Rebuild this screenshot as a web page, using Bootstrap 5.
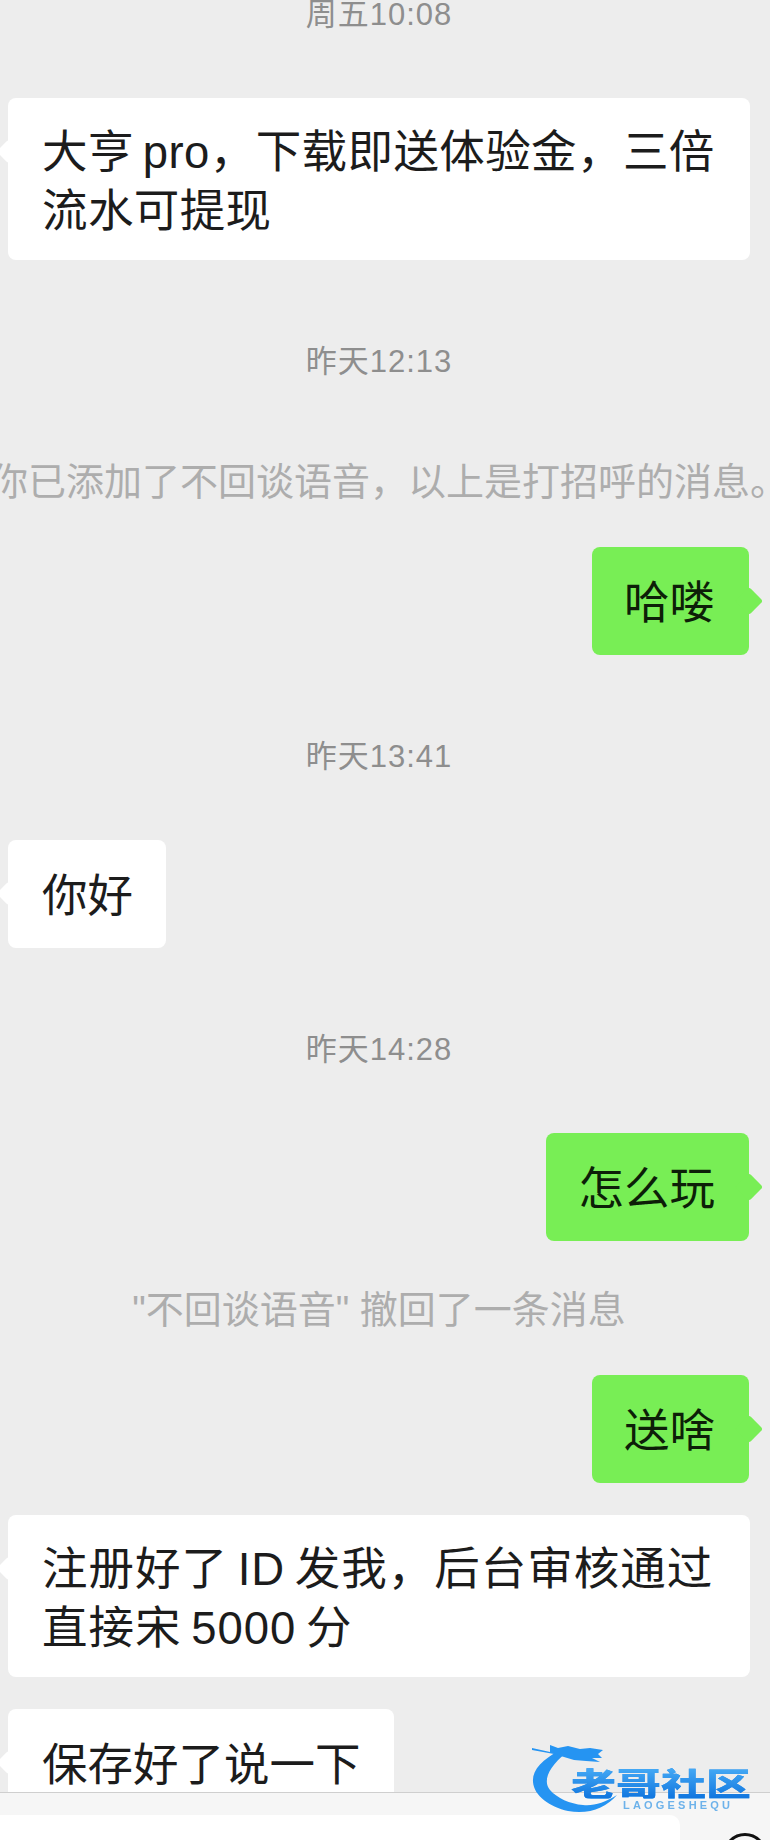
<!DOCTYPE html>
<html lang="zh-CN">
<head>
  <meta charset="UTF-8">
  <title>聊天记录</title>
  <meta name="viewport" content="width=device-width, initial-scale=1">
  <link href="https://cdn.jsdelivr.net/npm/bootstrap@5.3.3/dist/css/bootstrap.min.css" rel="stylesheet">
  <style>
    body {
      background: #ededed;
      font-family: "Liberation Sans", "Noto Sans CJK SC", sans-serif;
      width: 770px;
      height: 1840px;
      overflow: hidden;
    }
    .chat-scroll {
      height: 1792px;
      overflow: hidden;
      padding: 0 20px 0 8px;
    }
    .stamp {
      height: 40px;
      line-height: 42px;
      font-size: 31px;
      letter-spacing: 1px;
      color: #8e8e8e;
      text-align: center;
      margin: 81px 0 64px;
    }
    .stamp-first {
      margin-top: -6px;
    }
    .sys-line {
      height: 44px;
      line-height: 44px;
      font-size: 38px;
      color: #adadad;
      white-space: nowrap;
      margin: 47px 0 43px;
    }
    .sys-wide {
      margin: 79px 0 43px 20px;
    }
    .bubble-row {
      margin-bottom: 32px;
    }
    .bubble-msg {
      position: relative;
      padding: 28px 33px 22px 34px;
      font-size: 45.5px;
      line-height: 58px;
      color: #1c1c1c;
      background: #fff;
      border-radius: 8px;
      white-space: nowrap;
    }
    .bubble-two {
      width: 742px;
      padding-top: 25px;
      padding-bottom: 19px;
      line-height: 59px;
      letter-spacing: .4px;
      word-spacing: -4px;
    }
    .bubble-spread {
      letter-spacing: 1px;
    }
    .bubble-msg::before {
      content: "";
      position: absolute;
      top: 45px;
      left: -8px;
      width: 17px;
      height: 17px;
      background: inherit;
      border-radius: 3px;
      transform: rotate(45deg);
    }
    .bubble-mine {
      background: #78ee55;
      color: #0d1f08;
      margin-right: 1px;
      padding-left: 32px;
      padding-right: 34px;
    }
    .bubble-mine::before {
      top: 44px;
      left: auto;
      right: -10px;
      width: 20px;
      height: 20px;
    }
    .input-bar {
      height: 48px;
      background: #f6f6f6;
      border-top: 1px solid #cfcfcf;
      overflow: hidden;
    }
    .input-box {
      width: 680px;
      height: 40px;
      margin-top: 22px;
      background: #fff;
      border-top-right-radius: 10px;
    }
    .round-btn {
      width: 44px;
      height: 44px;
      margin: 40px 0 0 43px;
      border: 3px solid #111;
      border-radius: 50%;
      flex-shrink: 0;
    }
    .site-mark {
      position: absolute;
      left: 528px;
      top: 1740px;
      width: 232px;
      height: 80px;
      filter: blur(.7px);
    }
    .site-mark svg {
      position: absolute;
      left: 0;
      top: 0;
    }
    .mark-name {
      position: absolute;
      left: 43px;
      top: 19px;
      font-family: "Noto Sans CJK SC", sans-serif;
      font-size: 45px;
      font-weight: 900;
      line-height: 46px;
      white-space: nowrap;
      background: linear-gradient(#4aaef7, #1075de);
      -webkit-background-clip: text;
      background-clip: text;
      color: transparent;
      transform: scaleY(.72);
      filter: drop-shadow(0 0 .7px #1c88ea);
    }
    .mark-sub {
      position: absolute;
      left: 95px;
      top: 59px;
      font-size: 11px;
      line-height: 12px;
      font-weight: 700;
      letter-spacing: 3.2px;
      color: #6db2ea;
      white-space: nowrap;
    }
  </style>
</head>
<body>

<div class="chat-scroll">
  <div class="stamp stamp-first">周五10:08</div>

  <div class="bubble-row d-flex">
    <div class="bubble-msg bubble-two">大亨 pro，下载即送体验金，三倍<br>流水可提现</div>
  </div>

  <div class="stamp">昨天12:13</div>

  <div class="sys-line sys-wide d-flex justify-content-center">你已添加了不回谈语音，以上是打招呼的消息。</div>

  <div class="bubble-row d-flex justify-content-end">
    <div class="bubble-msg bubble-mine">哈喽</div>
  </div>

  <div class="stamp">昨天13:41</div>

  <div class="bubble-row d-flex">
    <div class="bubble-msg">你好</div>
  </div>

  <div class="stamp">昨天14:28</div>

  <div class="bubble-row d-flex justify-content-end">
    <div class="bubble-msg bubble-mine">怎么玩</div>
  </div>

  <div class="sys-line d-flex justify-content-center">"不回谈语音" 撤回了一条消息</div>

  <div class="bubble-row d-flex justify-content-end">
    <div class="bubble-msg bubble-mine">送啥</div>
  </div>

  <div class="bubble-row d-flex">
    <div class="bubble-msg bubble-two bubble-spread">注册好了 ID 发我，后台审核通过<br>直接宋 5000 分</div>
  </div>

  <div class="bubble-row d-flex">
    <div class="bubble-msg">保存好了说一下</div>
  </div>
</div>

<div class="input-bar d-flex">
  <div class="input-box"></div>
  <div class="round-btn"></div>
</div>

<div class="site-mark">
  <svg width="110" height="80" viewBox="0 0 110 80">
    <path fill="#2594f2" d="M32 10C14 20 4 30 5 42C6 56 22 67 40 71C60 75 78 68 89 55C76 63 66 66 55 65C42 64 29 58 22 50C15 42 19 28 39 12Z"/>
    <path fill="#2594f2" d="M22 5L30 8L40 6L52 9L62 8L75 10L70 14L74 18L64 18L72 22L58 21L46 20L36 17L26 14L4 10L4 8L22 12Z"/>
  </svg>
  <div class="mark-name">老哥社区</div>
  <div class="mark-sub">LAOGESHEQU</div>
</div>

<script src="https://cdn.jsdelivr.net/npm/bootstrap@5.3.3/dist/js/bootstrap.bundle.min.js"></script>
</body>
</html>
